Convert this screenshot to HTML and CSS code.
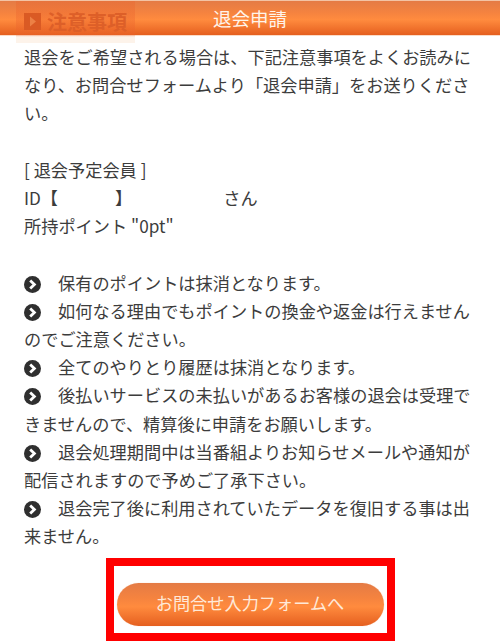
FILE: index.html
```html
<!DOCTYPE html>
<html lang="ja">
<head>
  <meta charset="UTF-8">
  <meta name="viewport" content="width=device-width, initial-scale=1.0">
  <title>退会申請</title>
  <link rel="stylesheet" href="styles.css">
</head>
<body>
  <header class="header">
    <div class="ghost-title">
      <svg class="ghost-icon" viewBox="0 0 17 17"><rect width="17" height="17" fill="#da5a24"/><path d="M6 3.5 L12 8.5 L6 13.5 Z" fill="#ec8045"/></svg>
      <span>注意事項</span>
    </div>
    <h1 class="header-title">退会申請</h1>
  </header>

  <main class="content">
    <p class="block">退会をご希望される場合は、下記注意事項をよくお読みになり、お問合せフォームより「退会申請」をお送りください。</p>

    <p class="block">
      [ 退会予定会員 ]<br>
      <span class="id-row"><span>ID【</span><span class="id-close">】</span><span class="id-name">さん</span></span><br>
      所持ポイント "0pt"
    </p>

    <ul class="notes">
      <li><svg class="bullet" viewBox="0 0 17 17"><circle cx="8.5" cy="8.5" r="8.5" fill="#2f2f2f"/><path d="M6.2 4.4 L10.4 8.5 L6.2 12.6" fill="none" stroke="#fff" stroke-width="2.8"/></svg>保有のポイントは抹消となります。</li>
      <li><svg class="bullet" viewBox="0 0 17 17"><circle cx="8.5" cy="8.5" r="8.5" fill="#2f2f2f"/><path d="M6.2 4.4 L10.4 8.5 L6.2 12.6" fill="none" stroke="#fff" stroke-width="2.8"/></svg>如何なる理由でもポイントの換金や返金は行えませんのでご注意ください。</li>
      <li><svg class="bullet" viewBox="0 0 17 17"><circle cx="8.5" cy="8.5" r="8.5" fill="#2f2f2f"/><path d="M6.2 4.4 L10.4 8.5 L6.2 12.6" fill="none" stroke="#fff" stroke-width="2.8"/></svg>全てのやりとり履歴は抹消となります。</li>
      <li><svg class="bullet" viewBox="0 0 17 17"><circle cx="8.5" cy="8.5" r="8.5" fill="#2f2f2f"/><path d="M6.2 4.4 L10.4 8.5 L6.2 12.6" fill="none" stroke="#fff" stroke-width="2.8"/></svg>後払いサービスの未払いがあるお客様の退会は受理できませんので、精算後に申請をお願いします。</li>
      <li><svg class="bullet" viewBox="0 0 17 17"><circle cx="8.5" cy="8.5" r="8.5" fill="#2f2f2f"/><path d="M6.2 4.4 L10.4 8.5 L6.2 12.6" fill="none" stroke="#fff" stroke-width="2.8"/></svg>退会処理期間中は当番組よりお知らせメールや通知が配信されますので予めご了承下さい。</li>
      <li><svg class="bullet" viewBox="0 0 17 17"><circle cx="8.5" cy="8.5" r="8.5" fill="#2f2f2f"/><path d="M6.2 4.4 L10.4 8.5 L6.2 12.6" fill="none" stroke="#fff" stroke-width="2.8"/></svg>退会完了後に利用されていたデータを復旧する事は出来ません。</li>
    </ul>

    <div class="highlight">
      <a class="form-btn" href="#">お問合せ入力フォームへ</a>
    </div>
  </main>
</body>
</html>
```

FILE: styles.css
```css
html, body {
  margin: 0;
  padding: 0;
  height: 641px;
  overflow: hidden;
  background: #fff;
}
body {
  font-family: "Noto Sans CJK JP", "Noto Sans", sans-serif;
  color: #3c3c3c;
}
.header {
  position: relative;
  height: 34px;
  margin-top: 1px;
  background: linear-gradient(#e47b45 0%, #f5833f 35%, #ff8b3e 55%, #e55f1f 100%);
  box-shadow: 0 -1px 0 #f3c3a4, 0 1px 0 #fbdcc8;
}
.header-title {
  position: relative;
  margin: 0;
  font-size: 18.5px;
  font-weight: 400;
  line-height: 34px;
  text-align: center;
  color: #fff4ea;
}
/* title of the page underneath, showing through the bar */
.ghost-title {
  position: absolute;
  top: 0;
  left: 16px;
  width: 119px;
  height: 42px;
  padding-left: 8px;
  box-sizing: border-box;
  display: flex;
  align-items: flex-start;
  gap: 6px;
  font-size: 20px;
  font-weight: 700;
  line-height: 42px;
  color: #dd5f28;
  background: linear-gradient(rgba(235, 100, 45, 0.35) 0, rgba(235, 100, 45, 0.35) 34px, #fdf3ea 36px);
}
.ghost-icon {
  width: 17px;
  height: 17px;
  margin-top: 12px;
}
.content {
  padding: 8px 24px 0;
  font-size: 17.2px;
  line-height: 28.2px;
}
.block {
  margin: 0 0 28.2px;
}
.id-row {
  display: inline-flex;
}
.id-close {
  margin-left: 57px;
}
.id-name {
  margin-left: 91px;
}
.notes {
  margin: 0;
  padding: 0;
  list-style: none;
}
.bullet {
  width: 17px;
  height: 17px;
  margin-right: 17px;
  vertical-align: -3px;
}
.highlight {
  box-sizing: border-box;
  width: 289px;
  height: 83px;
  margin: 7px auto 0;
  padding: 17px 3px 7px;
  border: 8px solid #f00;
  background: #fff;
}
.form-btn {
  display: block;
  height: 43px;
  border-radius: 22px;
  background: linear-gradient(#e47b45 0%, #f5833f 35%, #ff8b3e 55%, #e55f1f 100%);
  box-shadow: 0 0 1px #f3c3a4;
  font-size: 17.2px;
  line-height: 40px;
  text-align: center;
  color: #ffe9d8;
  text-decoration: none;
}
```
